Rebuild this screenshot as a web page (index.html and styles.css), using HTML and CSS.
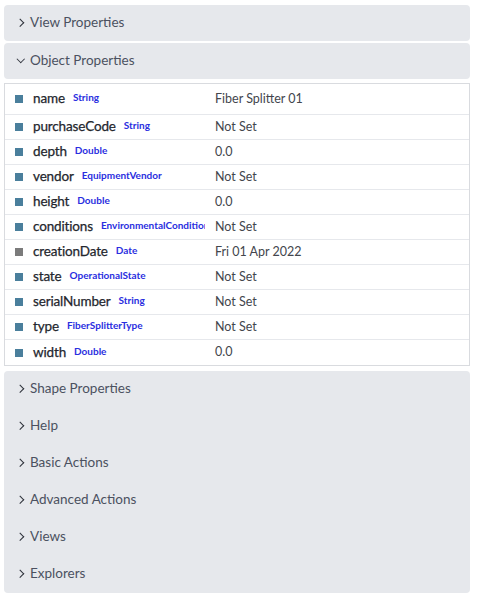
FILE: index.html
```html
<!DOCTYPE html>
<html>
<head>
<meta charset="utf-8">
<link rel="stylesheet" href="styles.css">
</head>
<body>
<div class="panel">
  <div class="section">
    <div class="header single"><span class="chev right"></span><span class="title">View Properties</span></div>
  </div>
  <div class="section">
    <div class="header single"><span class="chev down"></span><span class="title">Object Properties</span></div>
  </div>
  <div class="props">
    <div class="row first"><div class="key"><span class="sq"></span><span class="pname">name</span><span class="ptype">String</span></div><div class="val">Fiber Splitter 01</div></div>
    <div class="row"><div class="key"><span class="sq"></span><span class="pname">purchaseCode</span><span class="ptype">String</span></div><div class="val">Not Set</div></div>
    <div class="row"><div class="key"><span class="sq"></span><span class="pname">depth</span><span class="ptype">Double</span></div><div class="val">0.0</div></div>
    <div class="row"><div class="key"><span class="sq"></span><span class="pname">vendor</span><span class="ptype">EquipmentVendor</span></div><div class="val">Not Set</div></div>
    <div class="row"><div class="key"><span class="sq"></span><span class="pname">height</span><span class="ptype">Double</span></div><div class="val">0.0</div></div>
    <div class="row"><div class="key"><span class="sq"></span><span class="pname">conditions</span><span class="ptype">EnvironmentalConditions</span></div><div class="val">Not Set</div></div>
    <div class="row"><div class="key"><span class="sq gray"></span><span class="pname">creationDate</span><span class="ptype">Date</span></div><div class="val">Fri 01 Apr 2022</div></div>
    <div class="row"><div class="key"><span class="sq"></span><span class="pname">state</span><span class="ptype">OperationalState</span></div><div class="val">Not Set</div></div>
    <div class="row"><div class="key"><span class="sq"></span><span class="pname">serialNumber</span><span class="ptype">String</span></div><div class="val">Not Set</div></div>
    <div class="row"><div class="key"><span class="sq"></span><span class="pname">type</span><span class="ptype">FiberSplitterType</span></div><div class="val">Not Set</div></div>
    <div class="row last"><div class="key"><span class="sq"></span><span class="pname">width</span><span class="ptype">Double</span></div><div class="val">0.0</div></div>
  </div>
  <div class="group">
    <div class="header"><span class="chev right"></span><span class="title">Shape Properties</span></div>
    <div class="header"><span class="chev right"></span><span class="title">Help</span></div>
    <div class="header"><span class="chev right"></span><span class="title">Basic Actions</span></div>
    <div class="header"><span class="chev right"></span><span class="title">Advanced Actions</span></div>
    <div class="header"><span class="chev right"></span><span class="title">Views</span></div>
    <div class="header"><span class="chev right"></span><span class="title">Explorers</span></div>
  </div>
</div>
</body>
</html>
```

FILE: styles.css
```css
* { box-sizing: border-box; }
html, body { margin: 0; padding: 0; background: #ffffff; }
body {
  font-family: Lato, "Noto Sans", sans-serif;
  color: #333;
}
.panel {
  width: 466px;
  margin: 5px 0 0 4px;
  display: flex;
  flex-direction: column;
}
.section { margin-bottom: 2px; }
.header {
  display: flex;
  align-items: center;
  height: 37px;
  padding: 0 0 3px 12px;
  background: #e6e8ec;
  color: #4b5160;
  font-size: 13.5px;
}
.header.single { height: 36px; border-radius: 4px; }
.chev {
  width: 10px;
  height: 10px;
  margin-right: 4px;
  display: inline-block;
  position: relative;
  top: 1px;
}
.chev::before {
  content: "";
  position: absolute;
  width: 4.5px;
  height: 4.5px;
  border-right: 1.8px solid #2f333c;
  border-bottom: 1.8px solid #2f333c;
}
.chev.right::before { left: 1px; top: 2px; transform: rotate(-45deg); }
.chev.down::before { left: 2px; top: 0px; transform: rotate(45deg); }
.props {
  margin-top: 2px;
  margin-bottom: 5px;
  border: 1px solid #d9dbdf;
  width: 466px;
}
.row {
  display: flex;
  align-items: center;
  height: 25px;
  padding-bottom: 2px;
  border-bottom: 1px solid #e6e8ec;
}
.row.first { height: 31px; }
.row.last { border-bottom: none; height: 25px; }
.key {
  width: 200px;
  display: flex;
  align-items: center;
  overflow: hidden;
  white-space: nowrap;
  padding-left: 10px;
}
.sq {
  flex: none;
  width: 8px;
  height: 8px;
  background: #4a7f9c;
  margin-right: 10px;
  position: relative;
  top: 1px;
}
.sq.gray { background: #7b7b7b; }
.pname {
  font-size: 13.5px;
  font-weight: 400;
  letter-spacing: -0.15px;
  color: #24272e;
  margin-right: 8px;
  -webkit-text-stroke: 0.25px #24272e;
}
.ptype {
  font-size: 10px;
  font-weight: 700;
  color: #2a2ee0;
  position: relative;
  top: -1px;
}
.val {
  padding-left: 10px;
  font-size: 12.5px;
  color: #43464d;
}
.group {
  display: flex;
  flex-direction: column;
  border-radius: 4px;
  overflow: hidden;
}
```
